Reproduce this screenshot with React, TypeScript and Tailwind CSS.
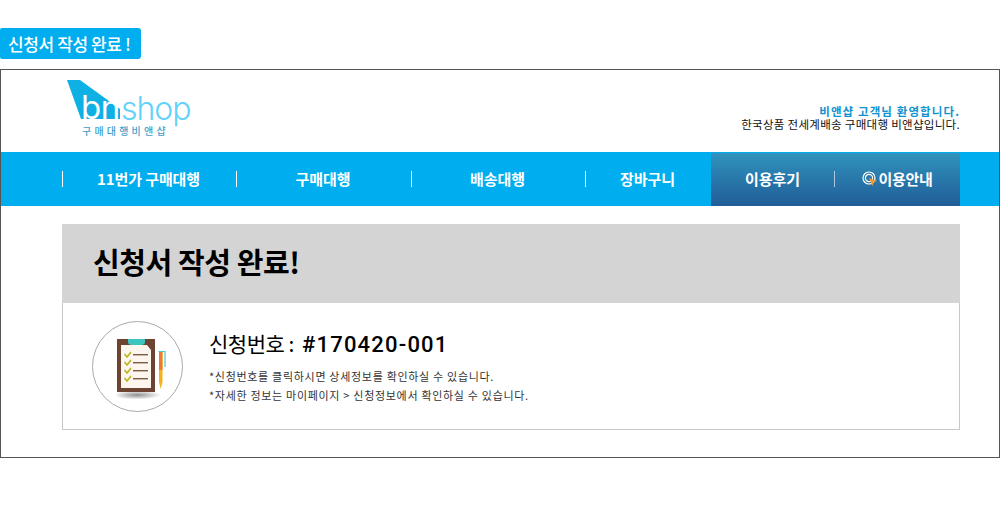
const font = "font-['Noto_Sans_CJK_KR','Noto_Sans',sans-serif]";

const Logo = () => (
  <div className="relative w-[124px] h-[56px]">
    <svg className="absolute left-0 top-0" width="124" height="56" viewBox="0 0 124 56">
      <path d="M0 0 H13 L53 29 V39 H14 Z" fill="#0fb0e4" />
    </svg>
    <span className="absolute left-[14px] top-[5px] font-['Inter',sans-serif] text-[33px] leading-[44px] tracking-[-0.5px] font-normal text-white">
      bn
    </span>
    <span className="absolute left-[54px] top-[7px] font-['Inter',sans-serif] text-[32px] leading-[44px] tracking-[-1px] font-light text-[#62d2fb]">
      shop
    </span>
    <span className={`absolute left-[15px] top-[45px] text-[10px] leading-[12px] tracking-[3.2px] font-medium text-[#3f9fcb] whitespace-nowrap ${font}`}>
      구매대행비앤샵
    </span>
  </div>
);

const Divider = () => <span className="w-px h-[16px] bg-white shrink-0" />;

const Target = () => (
  <svg width="16" height="16" viewBox="0 0 16 16" className="shrink-0">
    <circle cx="7" cy="7" r="6" fill="none" stroke="#fff" strokeWidth="1.2" />
    <circle cx="7" cy="7" r="3.6" fill="none" stroke="#fff" strokeWidth="1.2" />
    <path d="M7 7 L15 10 L11.6 11.4 L10.4 15 Z" fill="#f39a2b" />
  </svg>
);

const NavItem = ({ label, w }: { label: string; w: string }) => (
  <div className={`flex items-center justify-center ${w} text-white text-[15px] font-bold tracking-[-0.1px] whitespace-nowrap`}>
    {label}
  </div>
);

const Clipboard = () => (
  <svg width="60" height="66" viewBox="0 0 60 66">
    <defs>
      <radialGradient id="sh">
        <stop offset="0" stopColor="#8f8f8f" />
        <stop offset="1" stopColor="#fff" />
      </radialGradient>
    </defs>
    <ellipse cx="20" cy="59" rx="24" ry="4.5" fill="url(#sh)" />
    <rect x="0" y="3" width="38" height="53" fill="#6d4431" />
    <path d="M4 9 H30 L34 14 V52 H4 Z" fill="#fdf6ee" />
    <path d="M11 3 H28 V6 Q28 9 24 9 H15 Q11 9 11 6 Z" fill="#3cc4c0" />
    {[18, 26, 34, 42].map((y) => (
      <g key={y}>
        <path d={`M7.5 ${y} L10 ${y + 3} L14 ${y - 2}`} fill="none" stroke="#bcb51d" strokeWidth="1.6" />
        <rect x="16" y={y} width="15" height="1.4" fill="#7b5a48" />
      </g>
    ))}
    <path d="M42 16 H45.5 V46 L43.7 53 L42 46 Z" fill="#f6b21c" />
    <rect x="42" y="16" width="3.5" height="18" fill="#ee7a2c" />
    <path d="M41.5 15.5 H48 V31" fill="none" stroke="#4ac8d4" strokeWidth="1.2" />
  </svg>
);

export default function App() {
  return (
    <div className={`w-[1000px] h-[512px] bg-white overflow-hidden pt-[28px] ${font}`}>
      <div className="w-[141px] h-[31px] bg-[#00aeef] rounded-r-[3px] rounded-l-[2px] flex items-center pl-[8px] text-white text-[17px] font-medium tracking-[-0.4px] whitespace-nowrap">
        신청서 작성 완료 !
      </div>

      <div className="mt-[10px] h-[389px] border border-[#555]">
        <div className="h-[82px] flex justify-between pl-[66px] pr-[39px] pt-[10px]">
          <Logo />
          <div className="pt-[25px] text-right text-[11.5px] leading-[13px] whitespace-nowrap">
            <p className="font-bold text-[#0f93cf] tracking-[1.1px]">비앤샵 고객님 환영합니다.</p>
            <p className="text-[#111] tracking-[0.3px]">한국상품 전세계배송 구매대행 비앤샵입니다.</p>
          </div>
        </div>

        <div className="h-[54px] bg-[#00aeef] flex items-center pl-[61px]">
          <Divider />
          <NavItem label="11번가 구매대행" w="w-[173px] pr-[2px]" />
          <Divider />
          <NavItem label="구매대행" w="w-[174px] pr-[2px]" />
          <Divider />
          <NavItem label="배송대행" w="w-[173px] pr-[2px]" />
          <Divider />
          <NavItem label="장바구니" w="w-[125px] pr-[2px]" />
          <div className="w-[249px] h-[53px] bg-gradient-to-b from-[#3093bd] to-[#215d97] flex items-center">
            <NavItem label="이용후기" w="w-[123px]" />
            <span className="w-px h-[16px] bg-[#a9c8dc] shrink-0" />
            <div className="flex items-center justify-center w-[125px] text-white text-[15px] font-bold tracking-[-0.3px]">
              <Target />
              이용안내
            </div>
          </div>
        </div>

        <div className="mx-[61px] mt-[18px] w-[898px]">
          <div className="h-[79px] bg-[#d4d4d4] flex items-center pl-[31px] pb-[3px]">
            <h1 className="text-[29px] font-bold text-black tracking-[-0.4px]">신청서 작성 완료!</h1>
          </div>
          <div className="h-[127px] border border-t-0 border-[#c8c8c8] flex items-center pl-[29px]">
            <div className="w-[91px] h-[91px] rounded-full border border-[#aaaaaa] flex items-center justify-center pl-[19px] pt-[6px] shrink-0">
              <Clipboard />
            </div>
            <div className="ml-[26px]">
              <p className="text-[21px] leading-[30px] text-black tracking-[-0.5px] whitespace-nowrap">
                신청번호 : <span className="ml-[4px] font-['Roboto',sans-serif] text-[22px] font-medium tracking-[1.2px]">#170420-001</span>
              </p>
              <p className="mt-[7px] text-[11px] leading-[19px] text-[#333] tracking-[0.7px] whitespace-nowrap">
                *신청번호를 클릭하시면 상세정보를 확인하실 수 있습니다.
              </p>
              <p className="text-[11px] leading-[19px] text-[#333] tracking-[0.7px] whitespace-nowrap">
                *자세한 정보는 마이페이지 &gt; 신청정보에서 확인하실 수 있습니다.
              </p>
            </div>
          </div>
        </div>
      </div>
    </div>
  );
}
